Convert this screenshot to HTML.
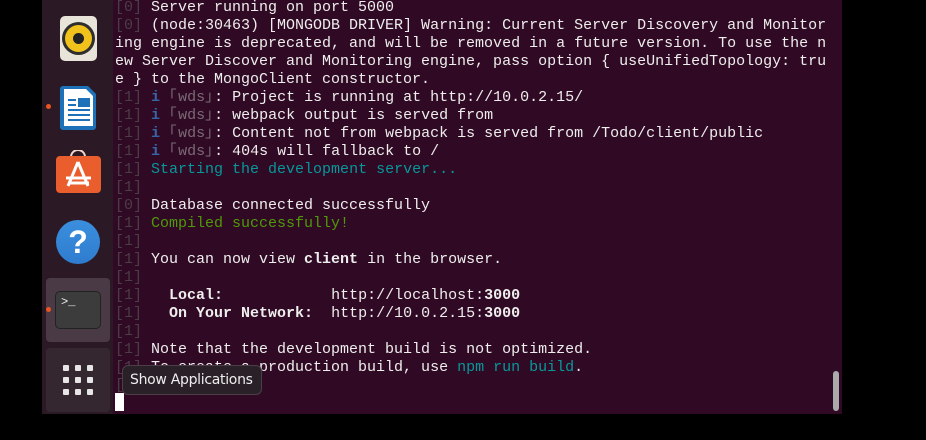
<!DOCTYPE html>
<html><head><meta charset="utf-8"><style>
*{margin:0;padding:0;box-sizing:border-box}
html,body{width:926px;height:440px;background:#000;overflow:hidden;position:relative}
#dock{position:absolute;left:42px;top:0;width:71px;height:414px;background:#2b1a26}
#term{position:absolute;left:113px;top:0;width:729px;height:414px;background:#300a25}
#txt{position:absolute;left:2px;top:-1px;font-family:"Liberation Mono","DejaVu Sans Mono",monospace;font-size:15px;line-height:18px;color:#eeeeec;white-space:pre}
.g{color:#4a3d44}.b{color:#3465a4;font-weight:bold}.w{color:#7a6a74}.t{color:#06989a}.gr{color:#4e9a06}
.k{display:inline-block;width:9px;overflow:visible}
b{font-weight:bold}
.ic{position:absolute}
.dot{position:absolute;left:46px;width:5px;height:5px;border-radius:50%;background:#e95420}
#tip{position:absolute;left:122px;top:365px;width:140px;height:30px;background:#2a2128;border:1px solid #4a3f47;border-radius:6px;color:#eee;font-family:"DejaVu Sans","Liberation Sans",sans-serif;font-size:14px;line-height:28px;padding-left:7px;letter-spacing:-0.3px}
</style></head><body>
<div id="dock"></div>
<div id="term"><div id="txt"><span class="g">[0]</span> Server running on port 5000
<span class="g">[0]</span> (node:30463) [MONGODB DRIVER] Warning: Current Server Discovery and Monitor
ing engine is deprecated, and will be removed in a future version. To use the n
ew Server Discover and Monitoring engine, pass option { useUnifiedTopology: tru
e } to the MongoClient constructor.
<span class="g">[1]</span> <span class="b">i</span> <span class="w"><span class="k">｢</span>wds<span class="k">｣</span></span>: Project is running at http://10.0.2.15/
<span class="g">[1]</span> <span class="b">i</span> <span class="w"><span class="k">｢</span>wds<span class="k">｣</span></span>: webpack output is served from
<span class="g">[1]</span> <span class="b">i</span> <span class="w"><span class="k">｢</span>wds<span class="k">｣</span></span>: Content not from webpack is served from /Todo/client/public
<span class="g">[1]</span> <span class="b">i</span> <span class="w"><span class="k">｢</span>wds<span class="k">｣</span></span>: 404s will fallback to /
<span class="g">[1]</span> <span class="t">Starting the development server...</span>
<span class="g">[1]</span>
<span class="g">[0]</span> Database connected successfully
<span class="g">[1]</span> <span class="gr">Compiled successfully!</span>
<span class="g">[1]</span>
<span class="g">[1]</span> You can now view <b>client</b> in the browser.
<span class="g">[1]</span>
<span class="g">[1]</span>   <b>Local:</b>            http://localhost:<b>3000</b>
<span class="g">[1]</span>   <b>On Your Network:</b>  http://10.0.2.15:<b>3000</b>
<span class="g">[1]</span>
<span class="g">[1]</span> Note that the development build is not optimized.
<span class="g">[1]</span> To create a production build, use <span class="t">npm run build</span>.
<span class="g">[1]</span></div>
<div style="position:absolute;left:2px;top:393px;width:9px;height:18px;background:#fff"></div>
<div style="position:absolute;left:720px;top:371px;width:6px;height:40px;border-radius:3px;background:#aaa"></div>
</div>
<!-- rhythmbox -->
<div class="ic" style="left:60px;top:16px;width:37px;height:45px;border-radius:5px;background:#e8e4da">
<div style="position:absolute;left:2px;top:6px;width:33px;height:33px;border-radius:50%;background:#2e2e2e"></div>
<div style="position:absolute;left:5px;top:9px;width:27px;height:27px;border-radius:50%;background:#f0c21b"></div>
<div style="position:absolute;left:13px;top:17px;width:11px;height:11px;border-radius:50%;background:#222"></div>
</div>
<!-- writer -->
<div class="dot" style="top:104px"></div>
<svg class="ic" style="left:60px;top:84px" width="37" height="46" viewBox="0 0 37 46">
<path d="M3 2h25l8 8v33a3 3 0 0 1-3 3H3a3 3 0 0 1-3-3V5a3 3 0 0 1 3-3z" fill="#1c71b8"/>
<path d="M4 5h22l7 7v30H4z" fill="#fff"/>
<rect x="8" y="15" width="8" height="2" fill="#1c71b8"/><rect x="8" y="20" width="8" height="2" fill="#1c71b8"/>
<rect x="18" y="14" width="12" height="9" fill="#1c71b8"/>
<rect x="8" y="25" width="22" height="2" fill="#1c71b8"/><rect x="8" y="30" width="22" height="2" fill="#1c71b8"/><rect x="8" y="35" width="22" height="2" fill="#1c71b8"/>
</svg>
<!-- store -->
<svg class="ic" style="left:56px;top:150px" width="45" height="43" viewBox="0 0 45 43">
<path d="M15 10V7a7 7 0 0 1 14 0v3" stroke="#f3d6c7" stroke-width="2" fill="none"/>
<rect x="0" y="6" width="45" height="37" rx="4" fill="#e95e2c"/>
<path d="M22 12L12 36M22 12l10 24M10 28h25M12 33h21" stroke="#fff" stroke-width="3" fill="none"/>
</svg>
<!-- help -->
<div class="ic" style="left:56px;top:220px;width:44px;height:44px;border-radius:50%;background:linear-gradient(#3a8fdd,#2f7ccf);color:#fff;font:bold 32px/44px 'Liberation Sans',sans-serif;text-align:center">?</div>
<!-- terminal -->
<div class="ic" style="left:46px;top:278px;width:64px;height:64px;border-radius:4px;background:#4a3a46"></div>
<div class="dot" style="top:307px"></div>
<div class="ic" style="left:55px;top:291px;width:46px;height:38px;border-radius:5px;background:#3c3c3c;border:1px solid #222;color:#eee;font:12px/16px 'Liberation Mono',monospace;padding:2px 5px">&gt;_</div>
<!-- apps -->
<div class="ic" style="left:46px;top:348px;width:64px;height:64px;border-radius:4px;background:#35272f"></div>
<svg class="ic" style="left:62px;top:364px" width="32" height="32"><g fill="#e6e6e6">
<rect x="1" y="1" width="6" height="6" rx="1"/><rect x="13" y="1" width="6" height="6" rx="1"/><rect x="25" y="1" width="6" height="6" rx="1"/>
<rect x="1" y="13" width="6" height="6" rx="1"/><rect x="13" y="13" width="6" height="6" rx="1"/><rect x="25" y="13" width="6" height="6" rx="1"/>
<rect x="1" y="25" width="6" height="6" rx="1"/><rect x="13" y="25" width="6" height="6" rx="1"/><rect x="25" y="25" width="6" height="6" rx="1"/></g></svg>
<div id="tip">Show Applications</div>
</body></html>
